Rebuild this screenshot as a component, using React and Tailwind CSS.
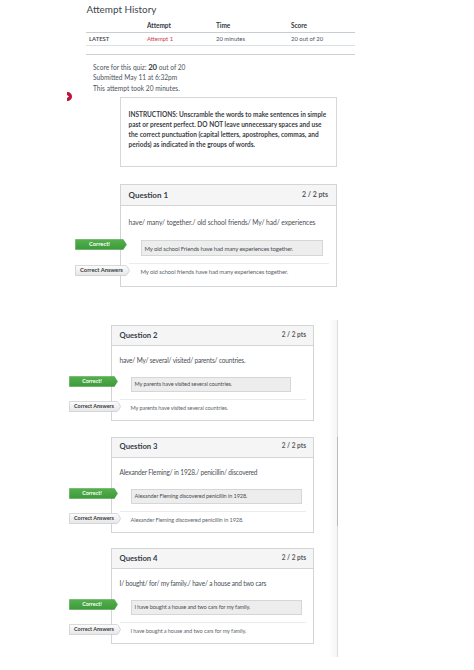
const attempts = [{ kept: 'LATEST', name: 'Attempt 1', time: '20 minutes', score: '20 out of 20' }]

const questions = [
  {
    no: 2,
    prompt: 'have/ My/ several/ visited/ parents/ countries.',
    answer: 'My parents have visited several countries.',
    fieldClass: 'w-[160px]',
  },
  {
    no: 3,
    prompt: 'Alexander Fleming/ in 1928./ penicillin/ discovered',
    answer: 'Alexander Fleming discovered penicillin in 1928.',
    fieldClass: 'w-[171px]',
  },
  {
    no: 4,
    prompt: 'I/ bought/ for/ my family./ have/ a house and two cars',
    answer: 'I have bought a house and two cars for my family.',
    fieldClass: 'w-[171px]',
  },
]

function AttemptTable() {
  const cols = 'grid grid-cols-[58px_69px_75px_1fr] pl-[3px] items-center border-b'
  return (
    <div className="w-[269px] border-b border-[#cdd0d3] pb-[8px] text-[5.9px] leading-[12px] text-[#4a545d]">
      <div className={`${cols} h-[14px] border-[#c7cdd1] text-[6.5px] font-bold tracking-[-0.05px] text-[#333b44]`}>
        <span />
        <span>Attempt</span>
        <span>Time</span>
        <span>Score</span>
      </div>
      {attempts.map((a) => (
        <div key={a.name} className={`${cols} h-[13px] border-[#dde0e3]`}>
          <span className="font-semibold text-[#39424b]">{a.kept}</span>
          <span className="text-[#c8434b]">{a.name}</span>
          <span>{a.time}</span>
          <span>{a.score}</span>
        </div>
      ))}
    </div>
  )
}

/** Pointed label that hangs over the left edge of a question card. */
function Tag({ children, correct, className }) {
  return (
    <div className={`absolute h-[11px] ${className}`}>
      <svg viewBox="0 0 54 12" preserveAspectRatio="none" className="absolute inset-0 h-full w-full">
        <defs>
          <linearGradient id="tag-green" x1="0" y1="0" x2="0" y2="1">
            <stop offset="0" stopColor="#55b04e" />
            <stop offset="1" stopColor="#3c9a38" />
          </linearGradient>
          <linearGradient id="tag-grey" x1="0" y1="0" x2="0" y2="1">
            <stop offset="0" stopColor="#fdfdfd" />
            <stop offset="1" stopColor="#e6e6e6" />
          </linearGradient>
        </defs>
        {correct ? (
          <path d="M.5 .5H50L53.5 6L50 11.5H.5Z" fill="url(#tag-green)" stroke="#3d9639" strokeWidth=".5" />
        ) : (
          <path d="M.5 .5H50Q51 .7 53.5 6Q51 11.3 50 11.5H.5Z" fill="url(#tag-grey)" stroke="#c4c4c4" strokeWidth=".7" />
        )}
      </svg>
      <span className={`relative block whitespace-nowrap text-center font-bold leading-[10px] ${correct ? 'pr-[3px] text-white' : 'pr-[2px] text-[#343a40]'}`}>
        {children}
      </span>
    </div>
  )
}

function QuestionCard({ no, prompt, answer, fieldClass }) {
  return (
    <section className="relative h-[96px] w-[203px] border border-[#d2d4d6] text-[#4a4f55]">
      <header className="flex h-[20px] items-center justify-between border-b border-[#d2d4d6] bg-[#f5f5f5] pl-[7.5px] pr-[7px]">
        <h2 className="text-[7.7px] font-bold text-[#35404a]">Question {no}</h2>
        <span className="pb-[2px] text-[6.5px] font-bold text-[#555b61]">2 / 2 pts</span>
      </header>
      <div className="px-[7.5px] pt-[9px]">
        <p className="whitespace-nowrap text-[6.55px] leading-[12px] tracking-[-0.18px]">{prompt}</p>
        <div className={`ml-[11px] mt-[10px] flex h-[15px] items-center whitespace-nowrap border border-[#d6d6d6] bg-[#ededed] pl-[3px] text-[5.6px] tracking-[-0.11px] ${fieldClass}`}>
          {answer}
        </div>
        <div className="mt-[7px] whitespace-nowrap border-t border-[#ececec] pl-[11px] pt-[2px] text-[5.6px] leading-[12px] tracking-[-0.11px] text-[#62676c]">
          {answer}
        </div>
      </div>
      <Tag correct className="-left-[43px] top-[50px] w-[49px] text-[5.4px]">Correct!</Tag>
      <Tag className="-left-[43px] top-[75px] w-[52px] text-[5.4px]">Correct Answers</Tag>
    </section>
  )
}

export default function App() {
  return (
    <div className="h-[670px] w-[474px] overflow-hidden bg-white font-['Lato',sans-serif] text-[#4a545d]">
      <div className="flex h-[320px]">
        <div className="w-[86px] pl-[67px] pt-[92px]">
          <svg viewBox="0 0 5 9" className="h-[9px] w-[5px]">
            <path d="M0 0C3 0 5 2 5 4.5S3 9 0 9V6L2 4.5L0 3Z" fill="#c0143c" />
          </svg>
        </div>
        <div className="w-[270px]">
          <h1 className="h-[19px] pl-[0.5px] text-[9.9px] leading-[18px] text-[#3d4650]">Attempt History</h1>
          <AttemptTable />
          <div className="h-[42px] pl-[7px] pt-[7px] text-[6.6px] leading-[10.3px]">
            <p>
              Score for this quiz: <b className="text-[7.7px] leading-none text-[#333b44]">20</b> out of 20
            </p>
            <p>Submitted May 11 at 6:32pm</p>
            <p>This attempt took 20 minutes.</p>
          </div>

          <div className="ml-[34px] h-[70px] w-[217px] whitespace-nowrap border border-[#d6d7d8] pl-[7.5px] pt-[12px] text-[6.5px] font-bold leading-[9.9px] text-[#3b4045]">
            <p>INSTRUCTIONS: Unscramble the words to make sentences in simple</p>
            <p>past or present perfect. DO NOT leave unnecessary spaces and use</p>
            <p>the correct punctuation (capital letters, apostrophes, commas, and</p>
            <p>periods) as indicated in the groups of words.</p>
          </div>

          <section className="relative ml-[34px] mt-[17px] h-[103px] w-[217px] border border-[#d2d4d6]">
            <header className="flex h-[21px] items-center justify-between border-b border-[#d2d4d6] bg-[#f5f5f5] pl-[7.5px] pr-[8px]">
              <h2 className="text-[8px] font-bold text-[#35404a]">Question 1</h2>
              <span className="pb-[2px] text-[7px] font-bold text-[#555b61]">2 / 2 pts</span>
            </header>
            <div className="px-[7.5px] pt-[10px] text-[#4a4f55]">
              <p className="whitespace-nowrap text-[6.7px] leading-[13px] tracking-[-0.07px]">have/ many/ together./ old school friends/ My/ had/ experiences</p>
              <div className="ml-[12px] mt-[11px] flex h-[16px] w-[182px] items-center whitespace-nowrap border border-[#d6d6d6] bg-[#ededed] pl-[3px] text-[6px] tracking-[-0.14px]">
                My old school Friends have had many experiences together.
              </div>
              <div className="mt-[7px] whitespace-nowrap border-t border-[#ececec] pl-[12px] pt-[2px] text-[6px] leading-[12px] tracking-[-0.14px] text-[#62676c]">
                My old school friends have had many experiences together.
              </div>
            </div>
            <Tag correct className="-left-[46px] top-[54px] w-[52px] text-[5.8px]">Correct!</Tag>
            <Tag className="-left-[46px] top-[80px] w-[55px] text-[5.8px]">Correct Answers</Tag>
          </section>
        </div>
      </div>

      <div className="relative flex h-[337px] w-[338px] flex-col gap-[15.6px] border-r border-[#dddddd] bg-linear-to-l from-[#f5f5f5] from-0% to-white to-[2.5%] pl-[111px] pt-[5px]">
        {questions.map((q) => (
          <QuestionCard key={q.no} {...q} />
        ))}
        {/* scrollbar thumb */}
        <div className="absolute -right-px top-[117px] h-[89px] w-px bg-[#b9bbbd]" />
      </div>
    </div>
  )
}
